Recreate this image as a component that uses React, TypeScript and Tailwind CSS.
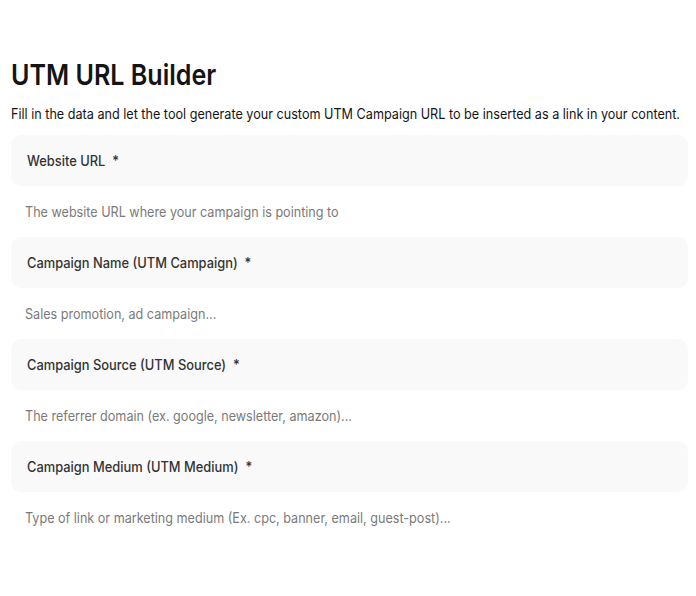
import React from "react";

const fields = [
  { label: "Website URL", help: "The website URL where your campaign is pointing to" },
  { label: "Campaign Name (UTM Campaign)", help: "Sales promotion, ad campaign..." },
  { label: "Campaign Source (UTM Source)", help: "The referrer domain (ex. google, newsletter, amazon)..." },
  { label: "Campaign Medium (UTM Medium)", help: "Type of link or marketing medium (Ex. cpc, banner, email, guest-post)..." },
];

export default function App() {
  return (
    <div className="w-[696px] h-[596px] bg-white overflow-hidden" style={{ fontFamily: "Inter, 'Noto Sans', sans-serif" }}>
      <div className="pt-[57px] pl-[11px] pr-[8px]">
        <h1 className="text-[29px] leading-[36px] font-semibold text-[#141414] whitespace-nowrap">
          <span className="inline-block origin-left scale-x-[0.865]">UTM URL Builder</span>
        </h1>
        <p className="mt-[11px] text-[14px] leading-[20px] text-[#141414] whitespace-nowrap">
          <span className="inline-block origin-left scale-x-[0.902]">
            Fill in the data and let the tool generate your custom UTM Campaign URL to be inserted as a link in your content.
          </span>
        </p>
        <div className="mt-[11px] flex flex-col">
          {fields.map((f) => (
            <div key={f.label} className="flex flex-col">
              <div className="h-[51px] rounded-[10px] bg-[#f9f9f9] flex items-center pl-[16px]">
                <span className="inline-block origin-left scale-x-[0.92] whitespace-nowrap text-[14px] font-medium text-[#333]">
                  {f.label}&nbsp;&nbsp;*
                </span>
              </div>
              <div className="h-[51px] flex items-center pl-[14px] text-[14px] text-[#7a7a7a] whitespace-nowrap">
                <span className="inline-block origin-left scale-x-[0.9]">{f.help}</span>
              </div>
            </div>
          ))}
        </div>
      </div>
    </div>
  );
}
